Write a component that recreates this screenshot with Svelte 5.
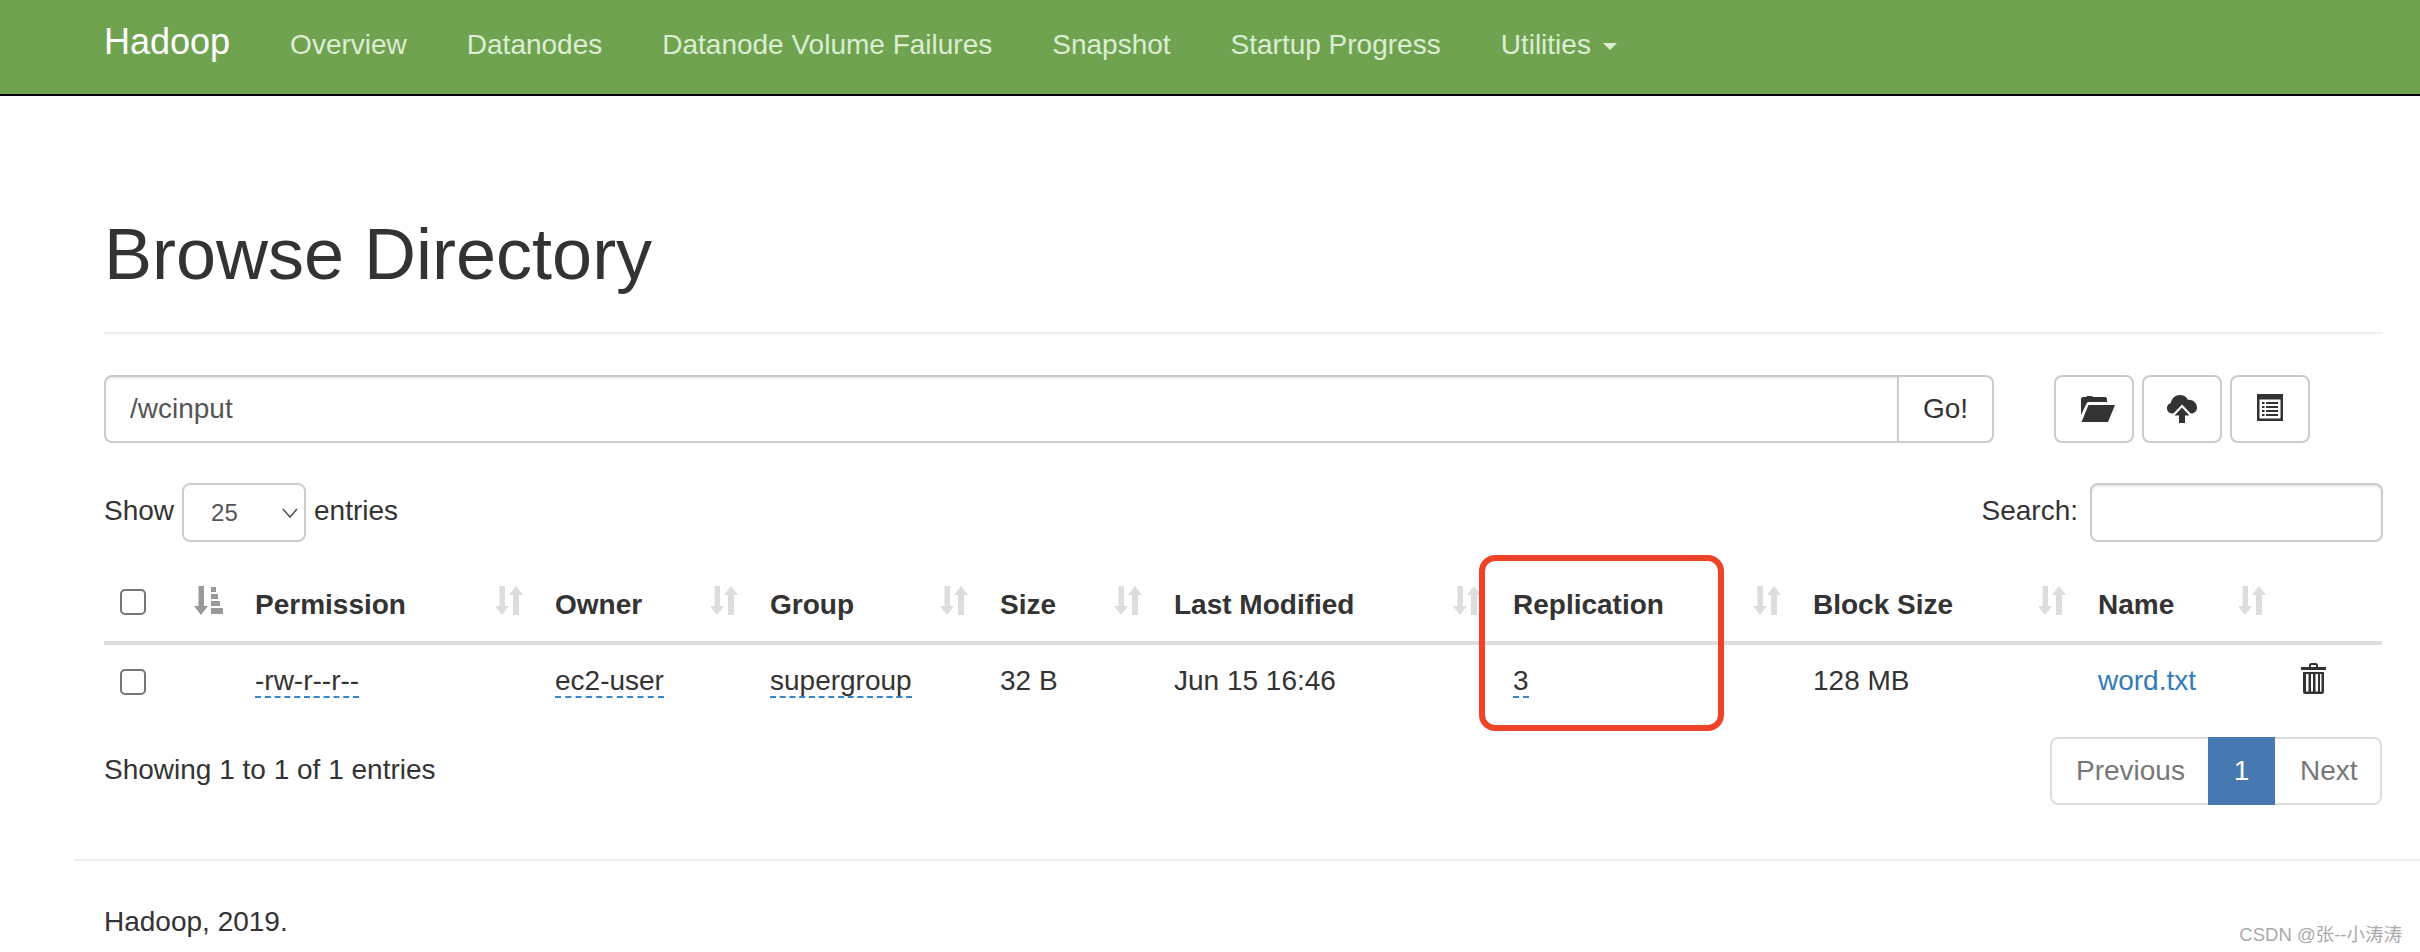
<script>
  const links = ['Overview', 'Datanodes', 'Datanode Volume Failures', 'Snapshot', 'Startup Progress'];
  const columns = [
    { label: 'Permission', cls: 'perm' },
    { label: 'Owner', cls: 'owner' },
    { label: 'Group', cls: 'group' },
    { label: 'Size', cls: 'size' },
    { label: 'Last Modified', cls: 'modified' },
    { label: 'Replication', cls: 'replication' },
    { label: 'Block Size', cls: 'block' },
    { label: 'Name', cls: 'name' }
  ];
</script>

{#snippet sortIcon()}
  <svg class="sort" viewBox="0 0 28 29" aria-hidden="true">
    <path d="M4.500 0h5.500v20h4l-7 9-7-9h4.500z" />
    <path d="M18 29V9h-4l7-9 7 9h-4v20z" />
  </svg>
{/snippet}

<div class="page">
  <nav class="navbar">
    <a class="brand" href="#top">Hadoop</a>
    {#each links as link}
      <a class="nav-link" href="#top">{link}</a>
    {/each}
    <a class="nav-link" href="#top">Utilities <span class="caret"></span></a>
  </nav>

  <div class="wrap">
    <main class="main">
      <h1>Browse Directory</h1>

      <div class="toolbar">
        <div class="path-group">
          <input class="path" type="text" value="/wcinput" />
          <button class="go">Go!</button>
        </div>
        <div class="tools">
          <button class="tool" aria-label="Create directory">
            <svg class="i-folder" viewBox="0 0 35 26">
              <path d="M1 3q0-2 2-2h3l1-1h5l1 1h12q2 0 2 2v3H8.500q-1.500 0-2 1.500L1 19z" />
              <path d="M8.500 9H35l-7 17H1.500z" />
            </svg>
          </button>
          <button class="tool" aria-label="Upload files">
            <svg class="i-cloud" viewBox="0 0 30 28">
              <path d="M5 18.500a5.300 5.300 0 0 1-1.200-10.400C4.500 3.500 8.500 0 13 0c3.500 0 6.500 2 7.800 4.800C25.800 4.300 30 8 30 12.500c0 3.500-2.500 6-6 6H20l-5-6-5 6z" />
              <path d="M15 9.500l10 10.500h-6v8h-8v-8H5z" fill="#fff" />
              <path d="M15 12.500l7.500 8h-4.500V28h-6v-7.500H7.500z" />
            </svg>
          </button>
          <button class="tool" aria-label="Cut and paste">
            <svg class="i-list" viewBox="0 0 26 27">
              <path fill-rule="evenodd" d="M0 0h26v27H0zM2.500 5.500v19h21v-19z" />
              <path d="M5 8h2.500v2H5zM9 8h12v2H9zM5 12h2.500v2H5zM9 12h12v2H9zM5 16h2.500v2H5zM9 16h12v2H9zM5 20h2.500v2H5zM9 20h12v2H9z" />
            </svg>
          </button>
        </div>
      </div>

      <div class="controls">
        <label class="field">
          <span>Show</span>
          <span class="select-box">
            <select class="length">
              <option>25</option>
            </select>
            <svg class="chevron" viewBox="0 0 16 10"><path d="M1 1l7 8 7-8" /></svg>
          </span>
          <span>entries</span>
        </label>
        <label class="field search">
          <span>Search:</span>
          <input class="search-input" type="search" />
        </label>
      </div>

      <table>
        <colgroup>
          <col class="c-check" />
          <col class="c-sort" />
          {#each columns as col}
            <col class="c-{col.cls}" />
          {/each}
          <col class="c-actions" />
        </colgroup>
        <thead>
          <tr>
            <th><input class="check head-check" type="checkbox" /></th>
            <th>
              <div class="th-inner end">
                <svg class="sort active" viewBox="0 0 29 29" aria-hidden="true">
                  <path d="M4.500 0h5.500v20h4l-7 9-7-9h4.500z" />
                  <path d="M17 1h5v5h-5zM17 8h7v5h-7zM17 15h9v5h-9zM17 22h12v6H17z" />
                </svg>
              </div>
            </th>
            {#each columns as col}
              <th>
                <div class="th-inner">
                  <span>{col.label}</span>
                  {@render sortIcon()}
                </div>
              </th>
            {/each}
            <th></th>
          </tr>
        </thead>
        <tbody>
          <tr>
            <td><input class="check row-check" type="checkbox" /></td>
            <td></td>
            <td><span class="editable">-rw-r--r--</span></td>
            <td><span class="editable">ec2-user</span></td>
            <td><span class="editable">supergroup</span></td>
            <td>32 B</td>
            <td>Jun 15 16:46</td>
            <td><span class="editable">3</span></td>
            <td>128 MB</td>
            <td><a class="file" href="#top">word.txt</a></td>
            <td>
              <svg class="trash" viewBox="0 0 25 31" aria-hidden="true">
                <path d="M8 4V2.500Q8 0 10.500 0h4Q17 0 17 2.500V4h8v3H0V4zM10 4h5V2h-5z" fill-rule="evenodd" />
                <path fill-rule="evenodd" d="M2 9h21v19.500q0 2.500-2.500 2.500h-16Q2 31 2 28.500zM5 11v17.500h2.500V11zM10 11v17.500h2V11zM14.500 11v17.500H17V11zM19 11v17.500h1.500V11z" />
              </svg>
            </td>
          </tr>
        </tbody>
      </table>

      <div class="table-foot">
        <div class="info">Showing 1 to 1 of 1 entries</div>
        <div class="pagination">
          <a class="page-item prev" href="#top">Previous</a>
          <a class="page-item current" href="#top">1</a>
          <a class="page-item next" href="#top">Next</a>
        </div>
      </div>
    </main>

    <footer class="footer">
      <p>Hadoop, 2019.</p>
    </footer>
  </div>

  <div class="highlight"></div>
  <div class="watermark">CSDN @张--小涛涛</div>
</div>

<style>
  :global(body) {
    margin: 0;
    background: #fff;
  }

  .page {
    position: relative;
    width: 2420px;
    height: 952px;
    overflow: hidden;
    font-family: "Liberation Sans", Arial, sans-serif;
    font-size: 28px;
    line-height: 40px;
    color: #333;
  }

  a {
    text-decoration: none;
  }

  .navbar {
    box-sizing: border-box;
    height: 96px;
    padding: 22px 0 0 104px;
    display: flex;
    align-items: baseline;
    background: #6fa34f;
    border-bottom: 2px solid #000;
  }

  .brand {
    font-size: 36px;
    color: #fff;
    margin-right: 30px;
  }

  .nav-link {
    padding: 0 30px;
    color: #dcedd4;
    white-space: nowrap;
  }

  .caret {
    display: inline-block;
    width: 0;
    height: 0;
    margin-left: 4px;
    vertical-align: middle;
    border-top: 7px solid #dcedd4;
    border-left: 7px solid transparent;
    border-right: 7px solid transparent;
  }

  .wrap {
    padding-left: 74px;
  }

  .main {
    padding: 0 37px 0 30px;
  }

  h1 {
    margin: 0;
    padding: 119px 0 38px;
    font-size: 72px;
    font-weight: 400;
    line-height: 79px;
    border-bottom: 2px solid #eee;
  }

  .toolbar {
    margin-top: 41px;
    display: flex;
  }

  .path-group {
    display: flex;
    width: 1890px;
    height: 68px;
  }

  .path {
    flex: 1;
    min-width: 0;
    box-sizing: border-box;
    padding: 0 24px;
    font: inherit;
    color: #555;
    border: 2px solid #ccc;
    border-right: 0;
    border-radius: 8px 0 0 8px;
    box-shadow: inset 0 2px 2px rgba(0, 0, 0, 0.075);
    outline: none;
  }

  .go,
  .tool {
    box-sizing: border-box;
    height: 68px;
    background: #fff;
    border: 2px solid #ccc;
    font: inherit;
    color: #333;
  }

  .go {
    width: 97px;
    padding: 0;
    border-radius: 0 8px 8px 0;
  }

  .tools {
    margin-left: 60px;
    display: flex;
    gap: 8px;
  }

  .tool {
    width: 80px;
    padding: 0;
    border-radius: 8px;
    display: flex;
    align-items: center;
    justify-content: center;
  }

  .tool svg {
    display: block;
    fill: #333;
  }

  .i-folder {
    width: 35px;
    height: 26px;
    margin-left: 6px;
  }

  .i-cloud {
    width: 30px;
    height: 28px;
  }

  .i-list {
    width: 26px;
    height: 27px;
    margin-top: -3px;
  }

  .controls {
    margin-top: 40px;
    height: 59px;
    display: flex;
    justify-content: space-between;
  }

  .field {
    display: flex;
    align-items: center;
    gap: 8px;
  }

  .field.search {
    gap: 12px;
  }

  .field > span {
    padding-bottom: 4px;
  }

  .field > .select-box {
    padding: 0;
  }

  .select-box {
    position: relative;
    display: block;
    width: 124px;
    height: 59px;
  }

  .length {
    appearance: none;
    box-sizing: border-box;
    width: 100%;
    height: 100%;
    padding: 0 0 0 27px;
    font-family: inherit;
    font-size: 24px;
    color: #555;
    background: #fff;
    border: 2px solid #ccc;
    border-radius: 8px;
    outline: none;
  }

  .chevron {
    position: absolute;
    top: 25px;
    right: 8px;
    width: 16px;
    height: 10px;
    fill: none;
    stroke: #555;
    stroke-width: 1.600;
  }

  .search-input {
    box-sizing: border-box;
    width: 293px;
    height: 59px;
    border: 2px solid #ccc;
    border-radius: 8px;
    box-shadow: inset 0 2px 2px rgba(0, 0, 0, 0.075);
    outline: none;
    font: inherit;
  }

  table {
    margin-top: 27px;
    width: 2278px;
    table-layout: fixed;
    border-collapse: collapse;
  }

  .c-check { width: 75px; }
  .c-sort { width: 60px; }
  .c-perm { width: 300px; }
  .c-owner { width: 215px; }
  .c-group { width: 230px; }
  .c-size { width: 174px; }
  .c-modified { width: 339px; }
  .c-replication { width: 300px; }
  .c-block { width: 285px; }
  .c-name { width: 200px; }
  .c-actions { width: 100px; }

  th,
  td {
    padding: 16px;
    text-align: left;
    vertical-align: top;
    white-space: nowrap;
  }

  th {
    height: 40px;
    font-weight: 700;
    border-bottom: 4px solid #ddd;
  }

  .th-inner {
    display: flex;
    justify-content: space-between;
    align-items: flex-start;
  }

  .th-inner.end {
    justify-content: flex-end;
  }

  .sort {
    display: block;
    flex: none;
    width: 28px;
    height: 29px;
    margin-top: 1px;
    fill: #ddd;
  }

  .sort.active {
    width: 29px;
    fill: #999;
  }

  .check {
    appearance: none;
    display: block;
    box-sizing: border-box;
    width: 26px;
    height: 26px;
    margin: 0;
    background: #fff;
    border: 2px solid #767676;
    border-radius: 5px;
  }

  .head-check {
    margin-top: 4px;
  }

  .row-check {
    margin-top: 8px;
  }

  .editable {
    border-bottom: 2px dashed #3a87c8;
  }

  .file {
    color: #337ab7;
  }

  .trash {
    display: block;
    width: 25px;
    height: 31px;
    margin: 2px 0 0 3px;
    fill: #333;
  }

  .table-foot {
    display: flex;
    justify-content: space-between;
    align-items: flex-start;
    width: 2278px;
  }

  .info {
    padding-top: 33px;
  }

  .pagination {
    margin-top: 20px;
    display: flex;
    height: 68px;
  }

  .page-item {
    box-sizing: border-box;
    height: 68px;
    padding: 12px 24px;
    color: #777;
    background: #fff;
    border: 2px solid #ddd;
  }

  .prev {
    width: 158px;
    border-right: 0;
    border-radius: 8px 0 0 8px;
  }

  .current {
    width: 67px;
    color: #fff;
    text-align: center;
    background: #4679b2;
    border-color: #4679b2;
    padding-left: 0;
    padding-right: 0;
  }

  .next {
    width: 107px;
    padding-left: 25px;
    border-left: 0;
    border-radius: 0 8px 8px 0;
  }

  .footer {
    margin-top: 54px;
    border-top: 2px solid #eee;
    padding: 41px 0 0 30px;
  }

  .footer p {
    margin: 0;
  }

  .highlight {
    position: absolute;
    left: 1479px;
    top: 555px;
    box-sizing: border-box;
    width: 245px;
    height: 176px;
    border: 6px solid #ee4327;
    border-radius: 16px;
    pointer-events: none;
  }

  .watermark {
    position: absolute;
    right: 18px;
    top: 922px;
    font-family: "Liberation Sans", "Noto Sans CJK SC", sans-serif;
    font-size: 18.500px;
    line-height: 26px;
    color: #aaa;
  }
</style>
